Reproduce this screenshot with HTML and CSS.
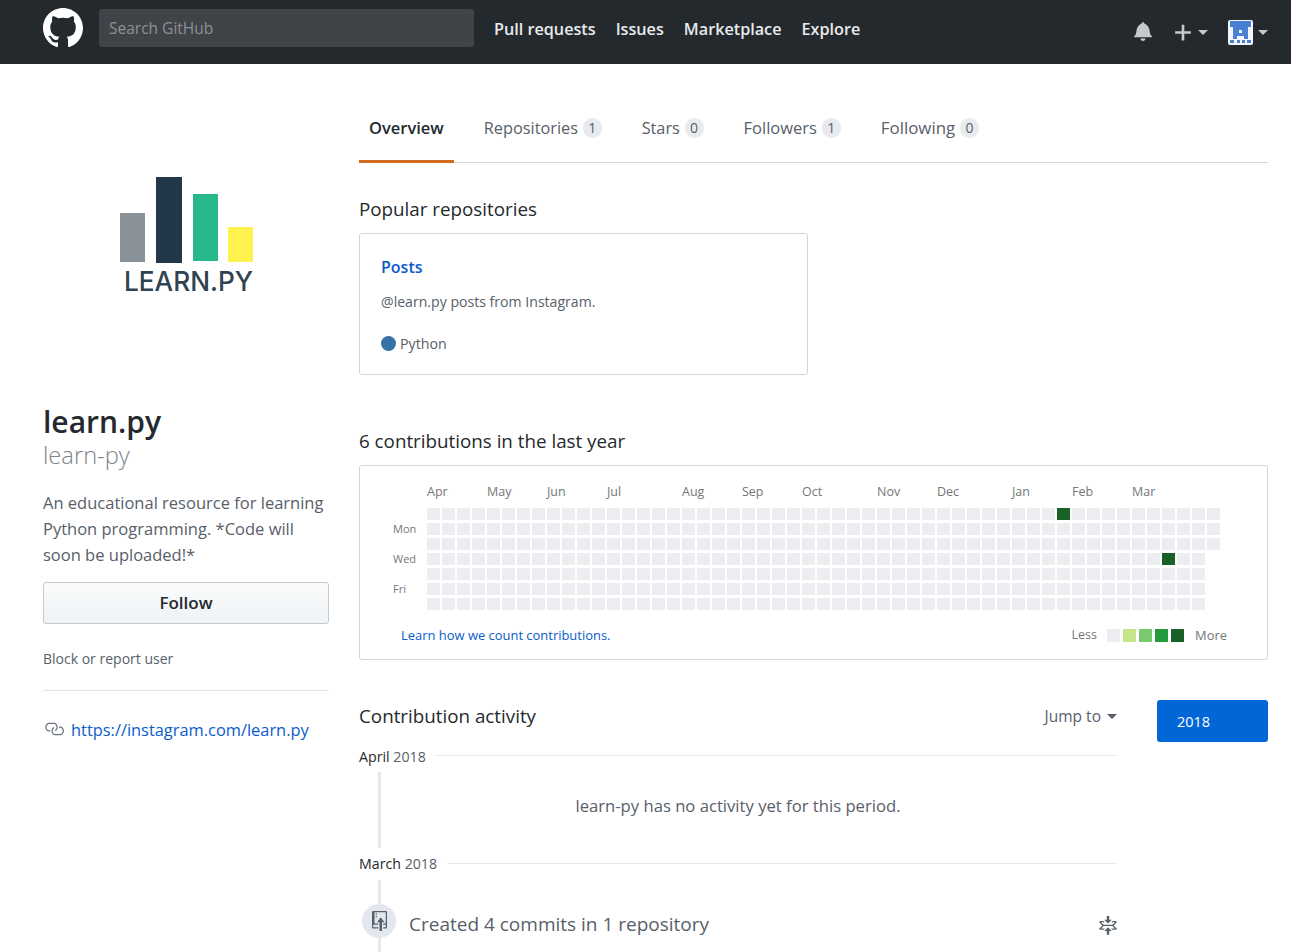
FILE: index.html
```html
<!DOCTYPE html>
<html lang="en">
<head>
    <meta charset="UTF-8">
    <meta name="viewport" content="width=device-width, initial-scale=1.0">
    <title>learn-py (learn.py)</title>
    <link rel="stylesheet" href="styles.css">
</head>
<body>
    <header class="topbar">
        <svg class="gh-logo" viewBox="0 0 16 16"><path fill-rule="evenodd" d="M8 0C3.58 0 0 3.58 0 8c0 3.54 2.29 6.53 5.47 7.59.4.07.55-.17.55-.38 0-.19-.01-.82-.01-1.49-2.01.37-2.53-.49-2.69-.94-.09-.23-.48-.94-.82-1.13-.28-.15-.68-.52-.01-.53.63-.01 1.08.58 1.23.82.72 1.21 1.87.87 2.33.66.07-.52.28-.87.51-1.07-1.78-.2-3.64-.89-3.64-3.95 0-.87.31-1.59.82-2.15-.08-.2-.36-1.02.08-2.12 0 0 .67-.21 2.2.82.64-.18 1.32-.27 2-.27.68 0 1.36.09 2 .27 1.53-1.04 2.2-.82 2.2-.82.44 1.1.16 1.92.08 2.12.51.56.82 1.27.82 2.15 0 3.07-1.87 3.75-3.65 3.95.29.25.54.73.54 1.48 0 1.07-.01 1.93-.01 2.2 0 .21.15.46.55.38A8.013 8.013 0 0 0 16 8c0-4.42-3.58-8-8-8z"/></svg>
        <div class="search">Search GitHub</div>
        <nav class="topnav">
            <a>Pull requests</a>
            <a>Issues</a>
            <a>Marketplace</a>
            <a>Explore</a>
        </nav>
        <div class="top-actions">
            <svg class="bell" viewBox="0 0 14 16"><path fill-rule="evenodd" d="M14 12v1H0v-1l.73-.58c.77-.77.81-2.55 1.19-4.42C2.69 3.23 6 2 6 2c0-.55.45-1 1-1s1 .45 1 1c0 0 3.39 1.23 4.16 5 .38 1.88.42 3.66 1.19 4.42l.66.58H14zm-7 4c1.11 0 2-.89 2-2H5c0 1.11.89 2 2 2z"/></svg>
            <svg class="plus" viewBox="0 0 12 16"><path fill-rule="evenodd" d="M12 9H7v5H5V9H0V7h5V2h2v5h5v2z"/></svg>
            <span class="caret plus-caret"></span>
            <svg class="identicon" viewBox="0 0 25 25">
                <rect width="25" height="25" rx="2" fill="#f2f5fb"/>
                <path fill="#4a80d2" d="M2 1h21v6h-3v12h-4v-3H9v3H5V7H2z"/>
                <rect x="11" y="10" width="3" height="3" fill="#f2f5fb"/>
                <path fill="#4a80d2" d="M2 20h4v3H2zM9 20h3v3H9zM14 20h3v3h-3zM19 20h4v3h-4z"/>
            </svg>
            <span class="caret"></span>
        </div>
    </header>

    <div class="page">
        <aside class="sidebar">
            <svg class="avatar" viewBox="0 0 286 286">
                <rect x="77" y="125" width="25" height="49" fill="#8a9299"/>
                <rect x="113" y="89" width="26" height="86" fill="#22384a"/>
                <rect x="150" y="106" width="25" height="67" fill="#27b88b"/>
                <rect x="185" y="139" width="25" height="35" fill="#fff24f"/>
                <text class="avatar-text" x="81" y="203" textLength="129" lengthAdjust="spacingAndGlyphs">LEARN.PY</text>
            </svg>
            <h1 class="name">learn.py</h1>
            <div class="nick">learn-py</div>
            <p class="bio">An educational resource for learning Python programming. *Code will soon be uploaded!*</p>
            <button class="follow">Follow</button>
            <div class="block-user">Block or report user</div>
            <div class="side-rule"></div>
            <div class="side-link">
                <svg class="link-icon" viewBox="0 0 16 16"><path fill-rule="evenodd" d="M4 9h1v1H4c-1.5 0-3-1.69-3-3.5S2.55 3 4 3h4c1.45 0 3 1.69 3 3.5 0 1.41-.91 2.72-2 3.25V8.59c.58-.45 1-1.27 1-2.09C10 5.22 8.98 4 8 4H4c-.98 0-2 1.22-2 2.5S3 9 4 9zm9-3h-1v1h1c1 0 2 1.22 2 2.5S13.98 12 13 12H9c-.98 0-2-1.22-2-2.5 0-.83.42-1.64 1-2.09V6.25c-1.09.53-2 1.84-2 3.25C6 11.31 7.55 13 9 13h4c1.45 0 3-1.69 3-3.5S14.5 6 13 6z"/></svg>
                <a>https://instagram.com/learn.py</a>
            </div>
        </aside>

        <main class="content">
            <nav class="tabs">
                <a class="tab active">Overview</a>
                <a class="tab">Repositories <span class="count">1</span></a>
                <a class="tab">Stars <span class="count">0</span></a>
                <a class="tab tab-followers">Followers <span class="count">1</span></a>
                <a class="tab tab-following">Following <span class="count">0</span></a>
            </nav>

            <h2 class="section-title popular-title">Popular repositories</h2>
            <div class="repo-card">
                <a class="repo-name">Posts</a>
                <p class="repo-desc">@learn.py posts from Instagram.</p>
                <div class="repo-lang"><span class="lang-dot"></span>Python</div>
            </div>

            <h2 class="section-title graph-title">6 contributions in the last year</h2>
            <div class="graph-box">
                <div class="months" id="months"></div>
                <div class="graph-row">
                    <div class="days">
                        <span class="day-mon">Mon</span>
                        <span class="day-wed">Wed</span>
                        <span class="day-fri">Fri</span>
                    </div>
                    <div class="cells" id="cells"></div>
                </div>
                <div class="graph-foot">
                    <a>Learn how we count contributions.</a>
                    <div class="legend">
                        <span class="legend-less">Less</span>
                        <i class="cell"></i>
                        <i class="cell l1"></i>
                        <i class="cell l2"></i>
                        <i class="cell l3"></i>
                        <i class="cell l4"></i>
                        <span class="legend-more">More</span>
                    </div>
                </div>
            </div>

            <div class="activity">
                <div class="timeline">
                    <div class="activity-head">
                        <h2 class="section-title">Contribution activity</h2>
                        <span class="jump">Jump to <span class="caret dark"></span></span>
                    </div>
                    <div class="month-row first"><b>April</b> 2018<span class="month-rule"></span></div>
                    <div class="empty-period">learn-py has no activity yet for this period.</div>
                    <div class="month-row second"><b>March</b> 2018<span class="month-rule"></span></div>
                    <div class="event">
                        <span class="event-badge">
                            <svg class="push-icon" viewBox="0 0 12 16"><path fill-rule="evenodd" d="M4 3H3V2h1v1zM3 5h1V4H3v1zm4 0L4 9h2v7h2V9h2L7 5zm4-5H1C.42 0 0 .42 0 1v12c0 .58.42 1 1 1h4v-1H1v-2h4v-1H2V1h9.02L11 10H9v1h2v2H9v1h2c.58 0 1-.42 1-1V1c0-.58-.42-1-1-1z"/></svg>
                        </span>
                        <span class="event-text">Created 4 commits in 1 repository</span>
                        <svg class="fold-icon" viewBox="0 0 14 16"><path fill-rule="evenodd" d="M7 9l3 3H8v3H6v-3H4l3-3zm3-6H8V0H6v3H4l3 3 3-3zm4 2c0-.55-.45-1-1-1h-2.5l-1 1h3l-2 2h-7l-2-2h3l-1-1H1c-.55 0-1 .45-1 1l2.5 2.5L0 10c0 .55.45 1 1 1h2.5l1-1h-3l2-2h7l2 2h-3l1 1H13c.55 0 1-.45 1-1l-2.5-2.5L14 5z"/></svg>
                    </div>
                </div>
                <div class="years">
                    <a class="year">2018</a>
                </div>
            </div>
        </main>
    </div>

    <script>
        // month label -> column it starts on
        let months = [["Apr", 0], ["May", 4], ["Jun", 8], ["Jul", 12], ["Aug", 17], ["Sep", 21],
                      ["Oct", 25], ["Nov", 30], ["Dec", 34], ["Jan", 39], ["Feb", 43], ["Mar", 47]];
        let monthRow = document.getElementById("months");
        months.forEach(m => {
            let label = document.createElement("span");
            label.textContent = m[0];
            label.style.gridColumnStart = m[1] + 1;
            monthRow.appendChild(label);
        });

        let cellGrid = document.getElementById("cells");
        for (let col = 0; col < 53; col++) {
            let rows = col === 52 ? 3 : 7;
            for (let row = 0; row < rows; row++) {
                let cell = document.createElement("i");
                cell.className = "cell";
                if ((col === 42 && row === 0) || (col === 49 && row === 3)) {
                    cell.className = "cell l4";
                }
                cellGrid.appendChild(cell);
            }
        }
    </script>
</body>
</html>
```

FILE: styles.css
```css
* {
    box-sizing: border-box;
}
body {
    margin: 0;
    font-family: "Open Sans", "Noto Sans", sans-serif;
    color: #24292e;
    background-color: #fff;
}
a {
    color: #0a5ccb;
}
.topbar {
    display: flex;
    align-items: center;
    height: 64px;
    padding: 0 23px 8px 43px;
    background-color: #24292e;
}
.gh-logo {
    width: 40px;
    height: 40px;
    fill: #fff;
    margin-right: 16px;
}
.search {
    width: 375px;
    height: 38px;
    padding-left: 10px;
    line-height: 38px;
    font-size: 15.5px;
    color: #8d9094;
    background-color: #404448;
    border-radius: 3px;
}
.topnav {
    display: flex;
    gap: 20px;
    margin: 2px 0 0 20px;
}
.topnav a {
    font-size: 16.2px;
    font-weight: 600;
    color: #e9eaeb;
}
.top-actions {
    display: flex;
    align-items: center;
    margin: 8px 0 0 auto;
}
.bell {
    width: 18px;
    height: 20px;
    margin: -3px 23px 0 0;
    fill: #c6c8ca;
}
.plus {
    width: 16px;
    height: 21px;
    fill: #c6c8ca;
    margin-right: 7px;
}
.caret {
    display: inline-block;
    width: 0;
    height: 0;
    border-left: 5px solid transparent;
    border-right: 5px solid transparent;
    border-top: 5px solid #c6c8ca;
}
.caret.dark {
    border-top-color: #586069;
    vertical-align: 3px;
    margin-left: 2px;
}
.plus-caret {
    margin-right: 20px;
}
.identicon {
    width: 25px;
    height: 25px;
    margin-right: 5px;
}
.page {
    display: flex;
    gap: 30px;
    padding: 24px 23px 0 43px;
}
.sidebar {
    width: 286px;
    flex-shrink: 0;
}
.avatar {
    display: block;
    width: 286px;
    height: 286px;
}
.avatar-text {
    font-family: "Inter", sans-serif;
    font-size: 27.5px;
    font-weight: 500;
    fill: #2f4350;
}
.name {
    margin: 28px 0 0 0;
    font-size: 30px;
    line-height: 40px;
    font-weight: 600;
}
.nick {
    font-size: 23.7px;
    line-height: 26px;
    font-weight: 300;
    color: #7d848b;
}
.bio {
    margin: 22px 0 0 0;
    font-size: 16.5px;
    line-height: 26px;
    color: #586069;
}
.follow {
    display: block;
    width: 100%;
    height: 42px;
    margin-top: 14px;
    padding-bottom: 3px;
    font-family: inherit;
    font-size: 17px;
    font-weight: 600;
    color: #24292e;
    background: linear-gradient(#fafbfc, #eff3f6);
    border: 1px solid #c5c8cc;
    border-radius: 3px;
}
.block-user {
    margin-top: 25px;
    font-size: 14px;
    line-height: 20px;
    color: #586069;
}
.side-rule {
    height: 1px;
    margin-top: 21px;
    background-color: #e1e4e8;
}
.side-link {
    display: flex;
    align-items: center;
    gap: 7px;
    height: 24px;
    margin-top: 26px;
    font-size: 16.4px;
}
.link-icon {
    width: 20px;
    height: 20px;
    margin-left: 1px;
    fill: #6a737d;
}
.content {
    width: 909px;
}
.tabs {
    display: flex;
    gap: 20px;
    border-bottom: 1px solid #d1d5da;
}
.tab {
    padding: 28px 10px 20px;
    margin-bottom: -1px;
    font-size: 16.3px;
    line-height: 24px;
    color: #586069;
    border-bottom: 3px solid transparent;
}
.tab.active {
    font-size: 16.5px;
    font-weight: 600;
    color: #24292e;
    border-bottom-color: #d1691f;
}
.tab-followers {
    font-size: 16.5px;
}
.tab-following {
    font-size: 16.9px;
}
.count {
    display: inline-block;
    min-width: 18px;
    padding: 0 5.5px;
    margin-left: 0.5px;
    font-size: 14px;
    line-height: 20px;
    text-align: center;
    color: #586069;
    background-color: #e8eaef;
    border-radius: 10px;
    vertical-align: 1px;
}
.section-title {
    margin: 0;
    font-size: 18.8px;
    line-height: 28px;
    font-weight: 400;
}
.popular-title {
    margin-top: 32px;
}
.repo-card {
    width: 449px;
    height: 142px;
    margin-top: 10px;
    padding: 21px;
    border: 1px solid #d1d5da;
    border-radius: 3px;
}
.repo-name {
    display: block;
    font-size: 16px;
    line-height: 24px;
    font-weight: 600;
}
.repo-desc {
    margin: 13px 0 0 0;
    font-size: 14.1px;
    line-height: 20px;
    color: #586069;
}
.repo-lang {
    display: flex;
    align-items: center;
    gap: 4px;
    margin-top: 22px;
    font-size: 14.2px;
    line-height: 20px;
    color: #586069;
}
.lang-dot {
    width: 15px;
    height: 15px;
    margin-top: -1px;
    border-radius: 50%;
    background-color: #3572a5;
}
.graph-title {
    margin-top: 52px;
}
.graph-box {
    height: 195px;
    margin-top: 10px;
    padding: 18px 0 0 33px;
    border: 1px solid #d1d5da;
    border-radius: 3px;
}
.months {
    display: grid;
    grid-template-columns: repeat(53, 15px);
    height: 16px;
    margin-left: 34px;
    font-size: 12.5px;
    line-height: 16px;
    color: #767676;
}
.months span {
    white-space: nowrap;
}
.graph-row {
    display: flex;
    margin-top: 8px;
}
.days {
    display: grid;
    grid-template-rows: repeat(7, 12px);
    row-gap: 3px;
    width: 34px;
    font-size: 11px;
    line-height: 12px;
    color: #767676;
}
.day-mon {
    grid-row: 2;
}
.day-wed {
    grid-row: 4;
}
.day-fri {
    grid-row: 6;
}
.cells {
    display: grid;
    grid-auto-flow: column;
    grid-template-rows: repeat(7, 12px);
    grid-auto-columns: 13px;
    gap: 3px 2px;
}
.cell {
    display: block;
    background-color: #ebedf0;
}
.cell.l1 {
    background-color: #c6e48b;
}
.cell.l2 {
    background-color: #7bc96f;
}
.cell.l3 {
    background-color: #239a3b;
}
.cell.l4 {
    background-color: #196127;
}
.graph-foot {
    display: flex;
    justify-content: space-between;
    align-items: center;
    height: 20px;
    margin-top: 15px;
    padding: 0 40px 0 8px;
    font-size: 12.95px;
    line-height: 20px;
}
.legend {
    display: flex;
    align-items: center;
    gap: 3px;
    color: #767676;
}
.legend .cell {
    width: 13px;
    height: 13px;
}
.legend-less {
    margin-right: 7px;
    font-size: 12.5px;
}
.legend-more {
    margin-left: 8px;
}
.activity {
    display: flex;
    gap: 40px;
    margin-top: 40px;
}
.timeline {
    width: 758px;
}
.activity-head {
    display: flex;
    justify-content: space-between;
    align-items: center;
    margin-top: 2px;
}
.jump {
    font-size: 15.5px;
    color: #586069;
}
.month-row {
    display: flex;
    font-size: 14.2px;
    line-height: 20px;
    color: #586069;
    white-space: pre;
}
.month-row b {
    font-weight: 500;
    color: #24292e;
}
.month-row.first {
    margin-top: 17px;
}
.month-row.second {
    margin-top: 6px;
}
.month-rule {
    flex: 1;
    height: 1px;
    margin: 8px 0 0 10px;
    background-color: #e6e8eb;
}
.second .month-rule {
    margin-top: 9px;
}
.empty-period {
    height: 76px;
    margin: 5px 0 0 19px;
    padding: 22px 22px 0 0;
    font-size: 16.65px;
    line-height: 24px;
    text-align: center;
    color: #586069;
    border-left: 3px solid #e6e8eb;
}
.event {
    display: flex;
    align-items: flex-start;
    height: 72px;
    margin: 6px 0 0 19px;
    padding-top: 24px;
    border-left: 3px solid #e6e8eb;
}
.event-badge {
    display: flex;
    align-items: center;
    justify-content: center;
    flex-shrink: 0;
    width: 34px;
    height: 34px;
    margin-left: -19px;
    border-radius: 50%;
    background-color: #e3e7ef;
}
.push-icon {
    width: 15px;
    height: 20px;
    fill: #586069;
}
.event-text {
    margin: 5px 0 0 13px;
    font-size: 19px;
    line-height: 30px;
    color: #586069;
}
.fold-icon {
    width: 18px;
    height: 20px;
    margin: 12px 0 0 auto;
    fill: #586069;
}
.years {
    width: 111px;
}
.year {
    display: block;
    height: 42px;
    padding-left: 20px;
    font-size: 14.5px;
    line-height: 43px;
    color: #fff;
    background-color: #0366d6;
    border-radius: 3px;
}
```
